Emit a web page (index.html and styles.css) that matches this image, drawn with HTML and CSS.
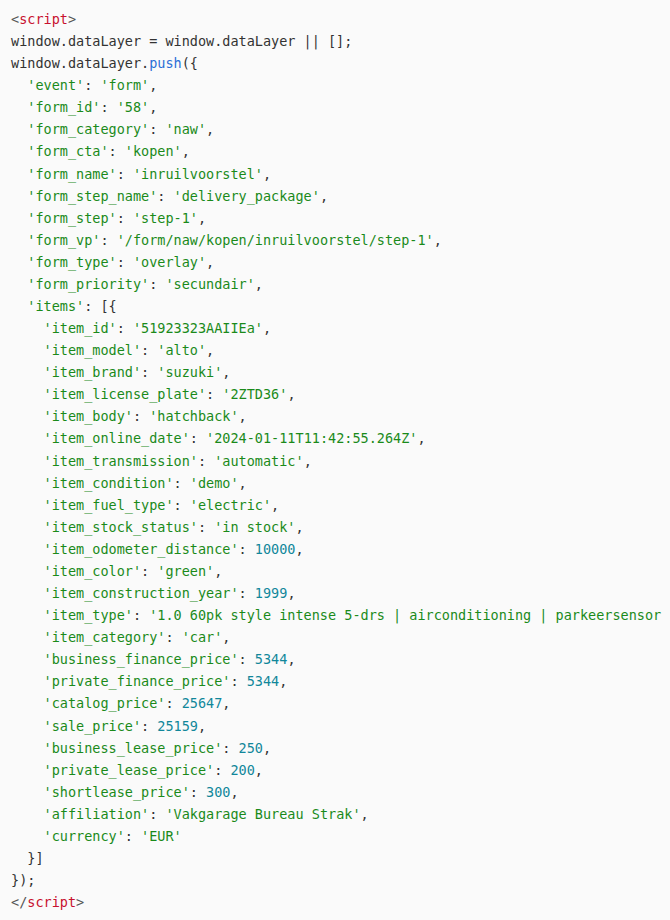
FILE: index.html
```html
<!DOCTYPE html>
<html lang="nl">
<head>
<meta charset="utf-8">
<title>dataLayer</title>
<link rel="stylesheet" href="styles.css">
</head>
<body>
<pre class="code"><code><span class="p">&lt;</span><span class="tag">script</span><span class="p">&gt;</span>
window.dataLayer = window.dataLayer || [];
window.dataLayer.<span class="fn">push</span>({
  <span class="s">'event'</span>: <span class="s">'form'</span>,
  <span class="s">'form_id'</span>: <span class="s">'58'</span>,
  <span class="s">'form_category'</span>: <span class="s">'naw'</span>,
  <span class="s">'form_cta'</span>: <span class="s">'kopen'</span>,
  <span class="s">'form_name'</span>: <span class="s">'inruilvoorstel'</span>,
  <span class="s">'form_step_name'</span>: <span class="s">'delivery_package'</span>,
  <span class="s">'form_step'</span>: <span class="s">'step-1'</span>,
  <span class="s">'form_vp'</span>: <span class="s">'/form/naw/kopen/inruilvoorstel/step-1'</span>,
  <span class="s">'form_type'</span>: <span class="s">'overlay'</span>,
  <span class="s">'form_priority'</span>: <span class="s">'secundair'</span>,
  <span class="s">'items'</span>: [{
    <span class="s">'item_id'</span>: <span class="s">'51923323AAIIEa'</span>,
    <span class="s">'item_model'</span>: <span class="s">'alto'</span>,
    <span class="s">'item_brand'</span>: <span class="s">'suzuki'</span>,
    <span class="s">'item_license_plate'</span>: <span class="s">'2ZTD36'</span>,
    <span class="s">'item_body'</span>: <span class="s">'hatchback'</span>,
    <span class="s">'item_online_date'</span>: <span class="s">'2024-01-11T11:42:55.264Z'</span>,
    <span class="s">'item_transmission'</span>: <span class="s">'automatic'</span>,
    <span class="s">'item_condition'</span>: <span class="s">'demo'</span>,
    <span class="s">'item_fuel_type'</span>: <span class="s">'electric'</span>,
    <span class="s">'item_stock_status'</span>: <span class="s">'in stock'</span>,
    <span class="s">'item_odometer_distance'</span>: <span class="n">10000</span>,
    <span class="s">'item_color'</span>: <span class="s">'green'</span>,
    <span class="s">'item_construction_year'</span>: <span class="n">1999</span>,
    <span class="s">'item_type'</span>: <span class="s">'1.0 60pk style intense 5-drs | airconditioning | parkeersensor</span>
    <span class="s">'item_category'</span>: <span class="s">'car'</span>,
    <span class="s">'business_finance_price'</span>: <span class="n">5344</span>,
    <span class="s">'private_finance_price'</span>: <span class="n">5344</span>,
    <span class="s">'catalog_price'</span>: <span class="n">25647</span>,
    <span class="s">'sale_price'</span>: <span class="n">25159</span>,
    <span class="s">'business_lease_price'</span>: <span class="n">250</span>,
    <span class="s">'private_lease_price'</span>: <span class="n">200</span>,
    <span class="s">'shortlease_price'</span>: <span class="n">300</span>,
    <span class="s">'affiliation'</span>: <span class="s">'Vakgarage Bureau Strak'</span>,
    <span class="s">'currency'</span>: <span class="s">'EUR'</span>
  }]
});
<span class="p">&lt;/</span><span class="tag">script</span><span class="p">&gt;</span></code></pre>
</body>
</html>
```
FILE: styles.css
```css
html, body {
  margin: 0;
  padding: 0;
  background: #fafafa;
}

.code {
  margin: 0;
  padding: 8px 0 0 11px;
  min-height: 920px;
  box-sizing: border-box;
  background: #fafafa;
  color: #333333;
  font-family: "DejaVu Sans Mono", "Liberation Mono", monospace;
  font-size: 13.5px;
  line-height: 22.08px;
  white-space: pre;
  overflow: hidden;
}

.code .p {
  color: #555555;
}

.code .tag {
  color: #c8102e;
}

.code .fn {
  color: #2b6fd6;
}

.code .s {
  color: #1a8a1a;
}

.code .n {
  color: #11879a;
}
```
